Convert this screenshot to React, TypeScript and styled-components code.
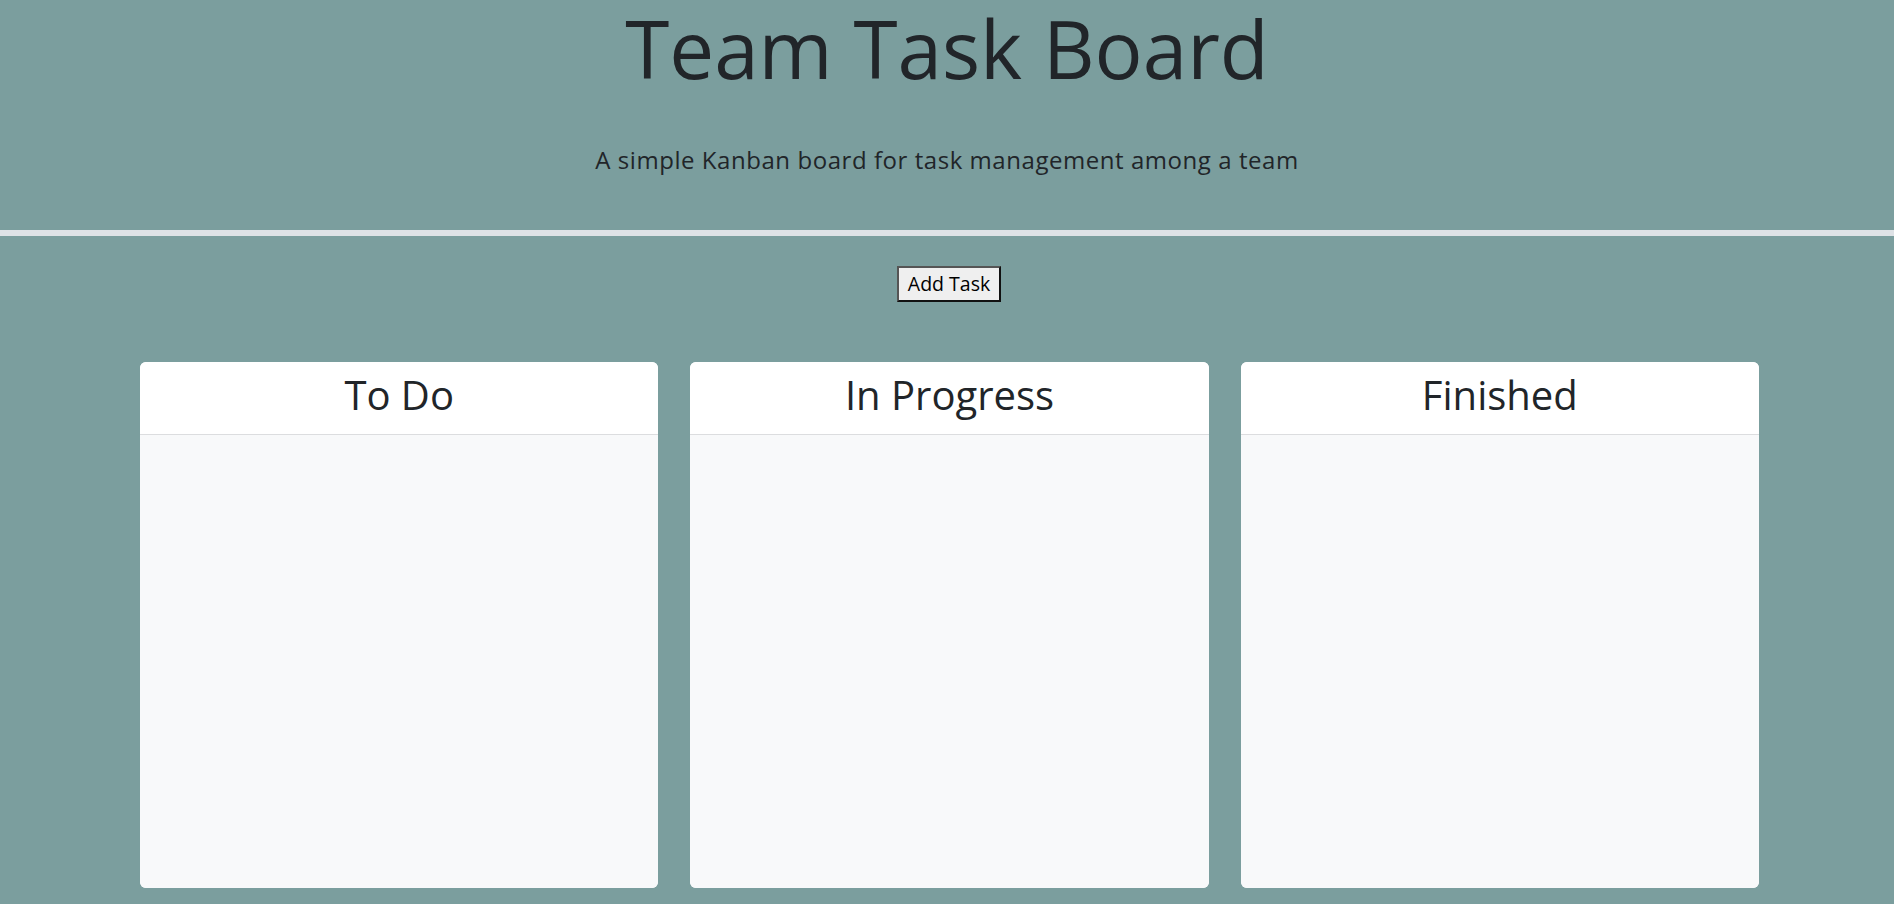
import React from "react";
import styled, { createGlobalStyle } from "styled-components";

const GlobalStyle = createGlobalStyle`
  html, body {
    margin: 0;
    padding: 0;
    background: #7b9e9e;
  }
  body {
    font-family: "Open Sans", "Noto Sans", sans-serif;
    color: #212529;
  }
  * { box-sizing: border-box; }
`;

const Page = styled.div`
  min-height: 904px;
  background: #7b9e9e;
`;

const Header = styled.header`
  text-align: center;
`;

const Title = styled.h1`
  margin: 0;
  font-size: 80px;
  font-weight: 400;
  line-height: 96px;
  color: #212529;
`;

const Lead = styled.p`
  margin: 46px 0 0;
  font-size: 24px;
  line-height: 36px;
  letter-spacing: 0.55px;
  font-weight: 400;
  color: #212529;
`;

const Divider = styled.hr`
  margin: 52px 0 0;
  border: 0;
  height: 6px;
  background: #dee2e6;
`;

const Toolbar = styled.div`
  display: flex;
  justify-content: center;
  padding-top: 30px;
  padding-left: 4px;
`;

const AddButton = styled.button`
  font-family: "Open Sans", "Noto Sans", sans-serif;
  font-size: 19.5px;
  line-height: 28px;
  padding: 2px 9px;
  height: 36px;
  color: #000;
  background: #efefef;
  border-width: 2px;
  border-style: solid;
  border-color: #555 #111 #111 #555;
  border-radius: 0;
  cursor: pointer;
`;

const Board = styled.main`
  display: grid;
  grid-template-columns: repeat(3, 1fr);
  gap: 32px;
  padding: 60px 135px 0 140px;
`;

const Card = styled.section`
  display: flex;
  flex-direction: column;
  height: 526px;
  border-radius: 6px;
  overflow: hidden;
  background: #f8f9fa;
`;

const CardHeader = styled.div`
  background: #fff;
  padding: 9px 16px 7px;
  border-bottom: 1px solid #dcdddf;
  text-align: center;
`;

const CardTitle = styled.h2`
  margin: 0 0 8px;
  font-size: 40px;
  line-height: 48px;
  font-weight: 400;
  color: #212529;
`;

const CardBody = styled.div`
  flex: 1;
  background: #f8f9fa;
`;

const lanes = ["To Do", "In Progress", "Finished"];

export default function App() {
  return (
    <Page>
      <GlobalStyle />
      <Header>
        <Title>Team Task Board</Title>
        <Lead>A simple Kanban board for task management among a team</Lead>
      </Header>
      <Divider />
      <Toolbar>
        <AddButton type="button">Add Task</AddButton>
      </Toolbar>
      <Board>
        {lanes.map((lane) => (
          <Card key={lane}>
            <CardHeader>
              <CardTitle>{lane}</CardTitle>
            </CardHeader>
            <CardBody />
          </Card>
        ))}
      </Board>
    </Page>
  );
}
